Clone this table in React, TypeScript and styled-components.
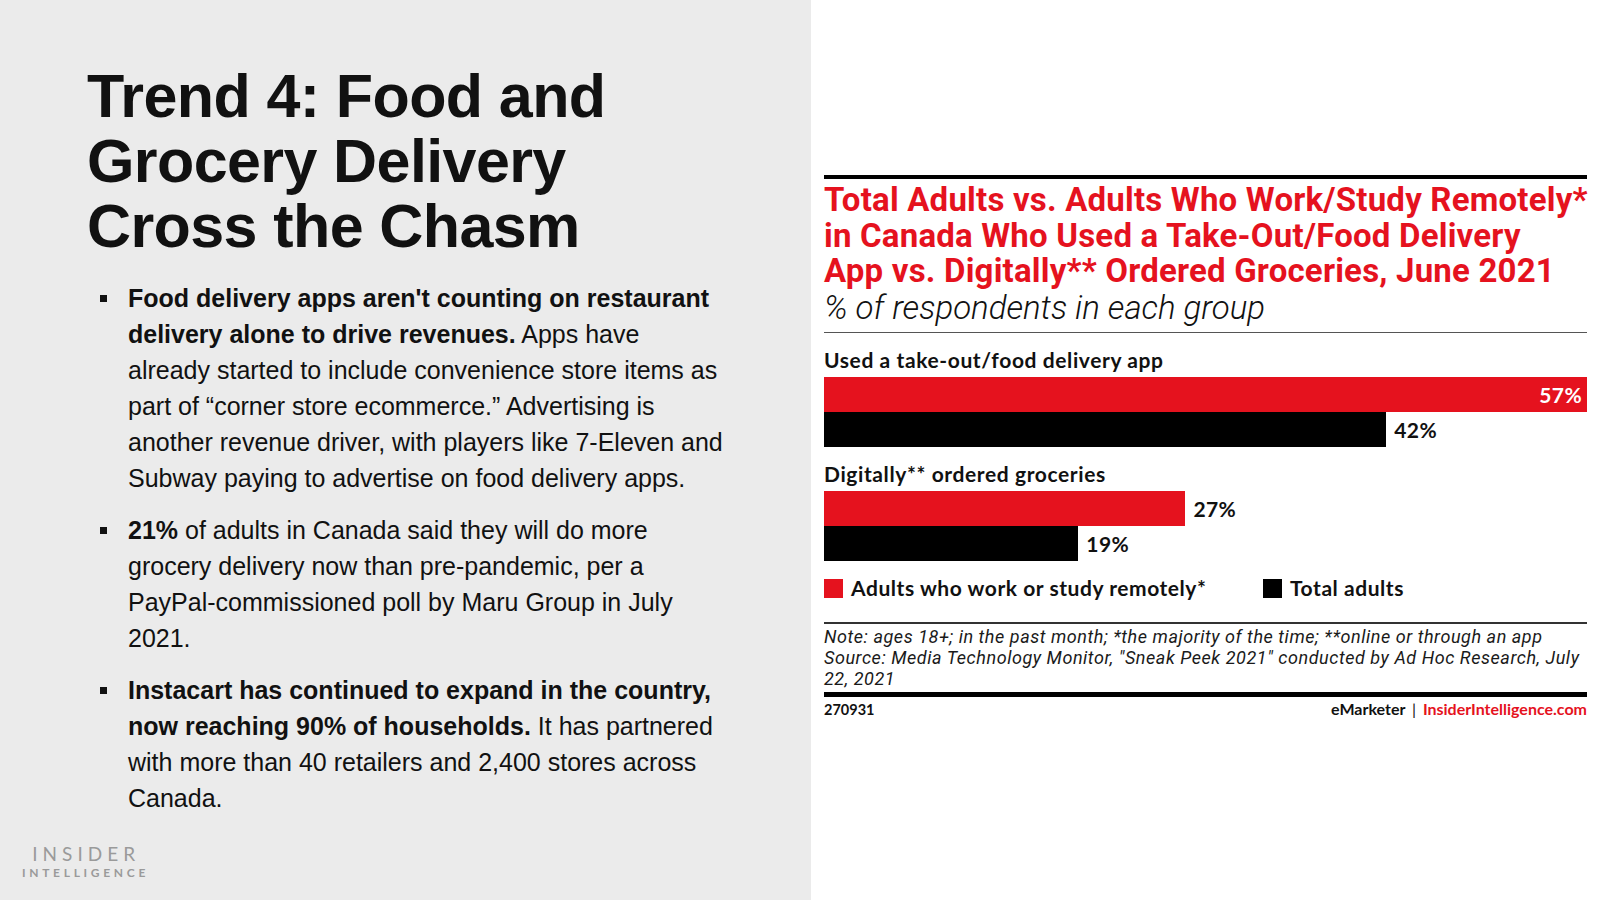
import React from 'react';
import styled, { createGlobalStyle } from 'styled-components';

const RED = '#e5121e';
const INK = '#111111';

const GlobalStyle = createGlobalStyle`
  html, body {
    margin: 0;
    padding: 0;
  }

  body {
    width: 1600px;
    height: 900px;
    overflow: hidden;
    background: #ffffff;
  }

  * {
    box-sizing: border-box;
  }
`;

type BarDatum = { value: number; color: string; inside?: boolean };
type Group = { label: string; bars: BarDatum[] };

const MAX_VALUE = 57;
const CHART_WIDTH = 763;

const GROUPS: Group[] = [
  {
    label: 'Used a take-out/food delivery app',
    bars: [
      { value: 57, color: RED, inside: true },
      { value: 42, color: '#000000' },
    ],
  },
  {
    label: 'Digitally** ordered groceries',
    bars: [
      { value: 27, color: RED },
      { value: 19, color: '#000000' },
    ],
  },
];

const App = () => {
  return (
    <>
      <GlobalStyle />
      <Slide>
        <TextPanel>
          <Content>
            <Title>
              Trend 4: Food and
              <br />
              Grocery Delivery
              <br />
              Cross the Chasm
            </Title>
            <Points>
              <Point>
                <Marker />
                <span>
                  <strong>Food delivery apps aren't counting on restaurant</strong>
                  <br />
                  <strong>delivery alone to drive revenues.</strong> Apps have
                  <br />
                  already started to include convenience store items as
                  <br />
                  part of “corner store ecommerce.” Advertising is
                  <br />
                  another revenue driver, with players like 7-Eleven and
                  <br />
                  Subway paying to advertise on food delivery apps.
                </span>
              </Point>
              <Point>
                <Marker />
                <span>
                  <strong>21%</strong> of adults in Canada said they will do more
                  <br />
                  grocery delivery now than pre-pandemic, per a
                  <br />
                  PayPal-commissioned poll by Maru Group in July
                  <br />
                  2021.
                </span>
              </Point>
              <Point>
                <Marker />
                <span>
                  <strong>Instacart has continued to expand in the country,</strong>
                  <br />
                  <strong>now reaching 90% of households.</strong> It has partnered
                  <br />
                  with more than 40 retailers and 2,400 stores across
                  <br />
                  Canada.
                </span>
              </Point>
            </Points>
          </Content>
          <Logo>
            <LogoTop>INSIDER</LogoTop>
            <LogoBottom>INTELLIGENCE</LogoBottom>
          </Logo>
        </TextPanel>

        <ChartPanel>
          <Figure>
            <Rule $size={4} />
            <ChartTitle>
              Total Adults vs. Adults Who Work/Study Remotely*
              <br />
              in Canada Who Used a Take-Out/Food Delivery
              <br />
              App vs. Digitally** Ordered Groceries, June 2021
            </ChartTitle>
            <Subtitle>% of respondents in each group</Subtitle>
            <Rule $size={1.5} $color="#555555" $gap={6} />

            {GROUPS.map((group) => (
              <GroupBlock key={group.label}>
                <GroupLabel>{group.label}</GroupLabel>
                <Bars>
                  {group.bars.map((bar) => (
                    <BarRow key={bar.value}>
                      <Bar
                        $color={bar.color}
                        style={{ width: `${(bar.value / MAX_VALUE) * CHART_WIDTH}px` }}
                      >
                        {bar.inside && <Value $inside>{bar.value}%</Value>}
                      </Bar>
                      {!bar.inside && <Value>{bar.value}%</Value>}
                    </BarRow>
                  ))}
                </Bars>
              </GroupBlock>
            ))}

            <Legend>
              <LegendItem>
                <Swatch $color={RED} />
                Adults who work or study remotely*
              </LegendItem>
              <LegendItem>
                <Swatch $color="#000000" />
                Total adults
              </LegendItem>
            </Legend>

            <Rule $size={1.5} $color="#333333" $gap={22} />
            <Notes>
              Note: ages 18+; in the past month; *the majority of the time; **online or through an app
              <br />
              Source: Media Technology Monitor, "Sneak Peek 2021" conducted by Ad Hoc Research, July
              <br />
              22, 2021
            </Notes>
            <Rule $size={5} $gap={3} />
            <Footer>
              <ChartId>270931</ChartId>
              <Credit>
                eMarketer <Divider>|</Divider> <Brand>InsiderIntelligence.com</Brand>
              </Credit>
            </Footer>
          </Figure>
        </ChartPanel>
      </Slide>
    </>
  );
};

const Slide = styled.div`
  display: flex;
  width: 1600px;
  height: 900px;
`;

const TextPanel = styled.section`
  display: flex;
  flex-direction: column;
  width: 811px;
  height: 900px;
  padding: 64px 0 20px 0;
  background: #ebebeb;
  color: ${INK};
  font-family: 'Liberation Sans', Arial, sans-serif;
`;

const Content = styled.div`
  padding-left: 87px;
`;

const Title = styled.h1`
  margin: 0;
  font-size: 61px;
  line-height: 65px;
  font-weight: 700;
  letter-spacing: -0.6px;
  white-space: nowrap;
`;

const Points = styled.ul`
  display: flex;
  flex-direction: column;
  gap: 16px;
  margin: 21px 0 0 13px;
  padding: 0;
  list-style: none;
`;

const Point = styled.li`
  display: flex;
  align-items: flex-start;
  font-size: 25px;
  line-height: 36px;
  white-space: nowrap;

  strong {
    font-weight: 700;
  }
`;

const Marker = styled.span`
  display: flex;
  align-items: center;
  flex: 0 0 28px;
  height: 36px;

  &::before {
    content: '';
    width: 7px;
    height: 7px;
    background: ${INK};
  }
`;

const Logo = styled.div`
  display: inline-flex;
  flex-direction: column;
  align-items: center;
  align-self: flex-start;
  margin: auto 0 0 22px;
  color: #9a9a9a;
  font-family: Lato, 'Liberation Sans', sans-serif;
`;

const LogoTop = styled.span`
  font-size: 19px;
  line-height: 20px;
  font-weight: 400;
  letter-spacing: 5px;
  margin-right: -5px;
`;

const LogoBottom = styled.span`
  margin-top: 2px;
  font-size: 12px;
  line-height: 14px;
  font-weight: 700;
  letter-spacing: 3.7px;
  margin-right: -3.7px;
`;

const ChartPanel = styled.section`
  flex: 1;
  padding: 175px 13px 0 13px;
  background: #ffffff;
  color: ${INK};
`;

const Figure = styled.div`
  display: flex;
  flex-direction: column;
  width: ${CHART_WIDTH}px;
`;

const Rule = styled.div<{ $size: number; $color?: string; $gap?: number }>`
  height: ${({ $size }) => $size}px;
  margin-top: ${({ $gap }) => $gap ?? 0}px;
  background: ${({ $color }) => $color ?? '#000000'};
`;

const ChartTitle = styled.h2`
  margin: 3px 0 0;
  color: ${RED};
  font-family: Roboto, 'Liberation Sans', sans-serif;
  font-size: 33px;
  line-height: 35.5px;
  font-weight: 700;
  letter-spacing: 0.2px;
  white-space: nowrap;
`;

const Subtitle = styled.p`
  margin: 1px 0 0;
  font-family: Roboto, 'Liberation Sans', sans-serif;
  font-size: 33px;
  line-height: 36px;
  font-style: italic;
  font-weight: 300;
`;

const GroupBlock = styled.div`
  display: flex;
  flex-direction: column;
  margin-top: 15px;

  & + & {
    margin-top: 15px;
  }
`;

const GroupLabel = styled.div`
  font-family: Lato, 'Liberation Sans', sans-serif;
  font-size: 21px;
  line-height: 24px;
  font-weight: 700;
  letter-spacing: 0.6px;
`;

const Bars = styled.div`
  display: flex;
  flex-direction: column;
  margin-top: 5px;
`;

const BarRow = styled.div`
  display: flex;
  align-items: center;
  height: 35px;
`;

const Bar = styled.div<{ $color: string }>`
  display: flex;
  align-items: center;
  justify-content: flex-end;
  height: 100%;
  background: ${({ $color }) => $color};
`;

const Value = styled.span<{ $inside?: boolean }>`
  padding: ${({ $inside }) => ($inside ? '0 5px 0 0' : '0 0 0 8px')};
  color: ${({ $inside }) => ($inside ? '#ffffff' : INK)};
  font-family: Lato, 'Liberation Sans', sans-serif;
  font-size: 21px;
  font-weight: 700;
  letter-spacing: 0.4px;
`;

const Legend = styled.div`
  display: grid;
  grid-template-columns: 439px auto;
  margin-top: 15px;
`;

const LegendItem = styled.div`
  display: flex;
  align-items: center;
  gap: 8px;
  font-family: Lato, 'Liberation Sans', sans-serif;
  font-size: 21px;
  line-height: 24px;
  font-weight: 700;
  letter-spacing: 0.55px;
`;

const Swatch = styled.span<{ $color: string }>`
  width: 19px;
  height: 19px;
  background: ${({ $color }) => $color};
`;

const Notes = styled.p`
  margin: 2px 0 0;
  font-family: Roboto, 'Liberation Sans', sans-serif;
  font-size: 18px;
  line-height: 21px;
  font-style: italic;
  font-weight: 400;
  letter-spacing: 0.55px;
  color: #1a1a1a;
  white-space: nowrap;
`;

const Footer = styled.div`
  display: flex;
  justify-content: space-between;
  align-items: baseline;
  margin-top: 3px;
  font-family: Lato, 'Liberation Sans', sans-serif;
  line-height: 18px;
  font-weight: 700;
`;

const ChartId = styled.span`
  font-size: 14.5px;
`;

const Credit = styled.span`
  font-size: 16px;
`;

const Divider = styled.span`
  margin: 0 3px;
  font-weight: 400;
`;

const Brand = styled.span`
  color: ${RED};
`;

export default App;
